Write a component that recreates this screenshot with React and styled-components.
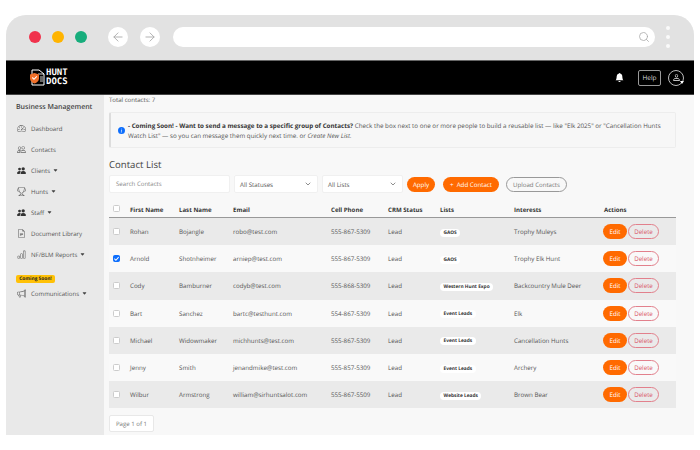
import React from 'react';
import styled, { createGlobalStyle } from 'styled-components';
import { ArrowLeft, ArrowRight, Search, ChevronDown } from 'lucide-react';
import {
  BsSpeedometer2, BsPeople, BsPeopleFill, BsTrophy, BsFileEarmarkText, BsBarChart,
  BsMegaphone, BsBellFill, BsPerson, BsInfoCircleFill, BsCaretDownFill,
} from 'react-icons/bs';

const contacts = [
  ['Rohan', 'Bojangle', 'robo@test.com', '555-867-5309', 'GAOS', 'Trophy Muleys'],
  ['Arnold', 'Shotnheimer', 'arniep@test.com', '555-867-5309', 'GAOS', 'Trophy Elk Hunt', true],
  ['Cody', 'Bamburner', 'codyb@test.com', '555-868-5309', 'Western Hunt Expo', 'Backcountry Mule Deer'],
  ['Bart', 'Sanchez', 'bartc@testhunt.com', '554-867-5309', 'Event Leads', 'Elk'],
  ['Michael', 'Widowmaker', 'michhunts@test.com', '555-867-5309', 'Event Leads', 'Cancellation Hunts'],
  ['Jenny', 'Smith', 'jenandmike@test.com', '555-857-5309', 'Event Leads', 'Archery'],
  ['Wilbur', 'Armstrong', 'william@sirhuntsalot.com', '555-867-5509', 'Website Leads', 'Brown Bear'],
];

const menu = [
  { label: 'Dashboard', icon: <BsSpeedometer2 size={9} /> },
  { label: 'Contacts', icon: <BsPeople size={9} /> },
  { label: 'Clients', icon: <BsPeopleFill size={9} color="#333" />, caret: true },
  { label: 'Hunts', icon: <BsTrophy size={9} />, caret: true },
  { label: 'Staff', icon: <BsPeopleFill size={9} color="#333" />, caret: true },
  { label: 'Document Library', icon: <BsFileEarmarkText size={9} /> },
  { label: 'NF/BLM Reports', icon: <BsBarChart size={9} />, caret: true },
];

export default function App() {
  return (
    <>
      <GlobalStyle />
      <Frame>
        <Chrome>
          <Light $color="#f0324c" />
          <Light $color="#ffb400" />
          <Light $color="#17ad7c" />
          <NavButtons>
            <RoundButton><ArrowLeft size={14} strokeWidth={1.5} /></RoundButton>
            <RoundButton><ArrowRight size={14} strokeWidth={1.5} /></RoundButton>
          </NavButtons>
          <UrlBar><Search size={12} strokeWidth={1.6} /></UrlBar>
          <Kebab><i /><i /><i /></Kebab>
        </Chrome>

        <TopBar>
          <Logo>
            <svg width="15" height="17" viewBox="0 0 15 17">
              <path d="M2 1h7l5 4v11H2z" fill="none" stroke="#fff" strokeWidth="1" />
              <path d="M8 5h6M10 8h3M10 10h3M10 12h3" stroke="#fff" strokeWidth="0.8" />
              <path d="M0 5.500l4.500-1.500 4.500 1.500v4c0 2.500-2 4-4.500 5C2 13.500 0 12 0 9.500z" fill="#f0702a" />
              <path d="M2.300 8.500l1.700 1.800 2.800-3" fill="none" stroke="#fff" strokeWidth="1.100" />
            </svg>
            <LogoText>HUNT<br />DOCS</LogoText>
          </Logo>
          <TopActions>
            <BsBellFill size={9} color="#fff" />
            <HelpButton>Help</HelpButton>
            <Avatar>
              <BsPerson size={9} color="#fff" />
              <AvatarCaret />
            </Avatar>
          </TopActions>
        </TopBar>

        <Body>
          <Sidebar>
            <SideTitle>Business Management</SideTitle>
            {menu.map(item => (
              <MenuItem key={item.label}>
                <MenuIcon>{item.icon}</MenuIcon>
                {item.label}
                {item.caret && <BsCaretDownFill size={5} color="#444" />}
              </MenuItem>
            ))}
            <Soon>Coming Soon!</Soon>
            <MenuItem>
              <MenuIcon><BsMegaphone size={9} /></MenuIcon>
              Communications
              <BsCaretDownFill size={5} color="#444" />
            </MenuItem>
          </Sidebar>

          <Main>
            <Total>Total contacts: 7</Total>
            <Notice>
              <NoticeIcon><BsInfoCircleFill size={7} color="#0d6efd" /></NoticeIcon>
              <div>
                <NoticeLine>
                  <b>- Coming Soon! - Want to send a message to a specific group of Contacts?</b> Check the box next to one or more people to build a reusable list — like "Elk 2025" or "Cancellation Hunts
                </NoticeLine>
                <NoticeLine>
                  Watch List" — so you can message them quickly next time. or <em>Create New List.</em>
                </NoticeLine>
              </div>
            </Notice>
            <Heading>Contact List</Heading>
            <Filters>
              <SearchBox>Search Contacts</SearchBox>
              <SelectBox $width="84px">All Statuses<ChevronDown size={8} /></SelectBox>
              <SelectBox $width="81px">All Lists<ChevronDown size={8} /></SelectBox>
              <OrangeButton $width="28px">Apply</OrangeButton>
              <OrangeButton $width="56px" $left="8px">+ &nbsp;Add Contact</OrangeButton>
              <UploadButton>Upload Contacts</UploadButton>
            </Filters>

            <HeadRow>
              <span><CheckBox /></span>
              <span>First Name</span>
              <span>Last Name</span>
              <span>Email</span>
              <span>Cell Phone</span>
              <span>CRM Status</span>
              <span>Lists</span>
              <span>Interests</span>
              <span>Actions</span>
            </HeadRow>
            {contacts.map((c, i) => (
              <Row key={c[2]} $odd={i % 2 === 0}>
                <span>
                  <CheckBox $checked={c[6]}>
                    {c[6] && (
                      <svg width="7" height="7" viewBox="0 0 8 8">
                        <path d="M1.500 4.200l1.800 1.800 3.200-3.600" fill="none" stroke="#fff" strokeWidth="1.200" />
                      </svg>
                    )}
                  </CheckBox>
                </span>
                <span>{c[0]}</span>
                <span>{c[1]}</span>
                <span>{c[2]}</span>
                <span>{c[3]}</span>
                <span>Lead</span>
                <span><Tag>{c[4]}</Tag></span>
                <span>{c[5]}</span>
                <Actions>
                  <EditButton>Edit</EditButton>
                  <DeleteButton>Delete</DeleteButton>
                </Actions>
              </Row>
            ))}
            <Pager>Page 1 of 1</Pager>
          </Main>
        </Body>
      </Frame>
    </>
  );
}

const GlobalStyle = createGlobalStyle`
  *, *:before, *:after {
    box-sizing: border-box;
  }

  body {
    margin: 0;
    background: #fff;
    font-family: 'Open Sans', sans-serif;
    color: #555;
    text-rendering: geometricPrecision;
  }
`;

const Frame = styled.div`
  width: 688px;
  height: 420px;
  margin: 15px 6px;
  display: flex;
  flex-direction: column;
  overflow: hidden;
  border-radius: 20px 20px 0 0;
  background: #f8f8f8;
`;

const Chrome = styled.div`
  height: 45px;
  flex: none;
  display: flex;
  align-items: center;
  padding: 0 0 1px 23px;
  background: #e2e2e2;
`;

const Light = styled.span`
  width: 12px;
  height: 12px;
  margin-right: 11px;
  border-radius: 50%;
  background: ${props => props.$color};
`;

const NavButtons = styled.div`
  display: flex;
  gap: 12px;
  margin: 0 13px 0 10px;
`;

const RoundButton = styled.span`
  width: 20px;
  height: 20px;
  display: flex;
  align-items: center;
  justify-content: center;
  border-radius: 50%;
  background: #fff;
  color: #a8a8a8;
`;

const UrlBar = styled.div`
  width: 482px;
  height: 20px;
  display: flex;
  align-items: center;
  justify-content: flex-end;
  padding-right: 5px;
  border-radius: 10px;
  background: #fff;
  color: #aaa;
`;

const Kebab = styled.div`
  display: flex;
  flex-direction: column;
  gap: 5px;
  margin-left: 11px;

  i {
    width: 4px;
    height: 4px;
    border-radius: 50%;
    background: #fafafa;
  }
`;

const TopBar = styled.header`
  height: 35px;
  flex: none;
  display: flex;
  align-items: center;
  justify-content: space-between;
  padding: 0 10px 0 24px;
  background: #000;
  border-top: 1px solid #666;
  border-bottom: 1px solid #444;
`;

const Logo = styled.div`
  display: flex;
  align-items: center;
  gap: 1px;
`;

const LogoText = styled.div`
  font-family: 'DejaVu Sans Mono', monospace;
  font-size: 9px;
  font-weight: 700;
  line-height: 8.500px;
  color: #fff;
`;

const TopActions = styled.div`
  display: flex;
  align-items: center;
`;

const HelpButton = styled.span`
  width: 23px;
  height: 16px;
  display: flex;
  align-items: center;
  justify-content: center;
  margin: 0 7px 0 14px;
  border: 1px solid #999;
  border-radius: 2px;
  font-size: 6.500px;
  color: #ddd;
`;

const Avatar = styled.span`
  position: relative;
  width: 16px;
  height: 16px;
  display: flex;
  align-items: center;
  justify-content: center;
  border: 1px solid #bbb;
  border-radius: 50%;
`;

const AvatarCaret = styled.i`
  position: absolute;
  right: -1px;
  bottom: 1px;
  border: 2px solid transparent;
  border-top: 3px solid #fff;
  border-bottom: 0;
`;

const Body = styled.div`
  flex: 1;
  display: flex;
  min-height: 0;
`;

const Sidebar = styled.aside`
  width: 98px;
  flex: none;
  padding: 7px 0 0 10px;
  background: #e9e9e9;
`;

const SideTitle = styled.div`
  height: 12px;
  margin-bottom: 4px;
  font-size: 7px;
  font-weight: 600;
  line-height: 12px;
  color: #444;
  white-space: nowrap;
`;

const MenuItem = styled.div`
  height: 21px;
  display: flex;
  align-items: center;
  gap: 3px;
  font-size: 6.100px;
  color: #555;
  white-space: nowrap;
`;

const MenuIcon = styled.span`
  width: 11px;
  margin-right: 1px;
  display: flex;
  justify-content: center;
  color: #666;
`;

const Soon = styled.span`
  display: block;
  width: 39px;
  height: 8px;
  margin-top: 9.500px;
  border-radius: 2px;
  background: #ffc107;
  font-size: 4.800px;
  font-weight: 700;
  line-height: 8px;
  text-align: center;
  color: #222;
`;

const Main = styled.main`
  flex: 1;
  min-width: 0;
  padding: 0 18px 0 5px;
`;

const Total = styled.div`
  height: 10px;
  font-size: 6.100px;
  line-height: 10px;
`;

const Notice = styled.div`
  height: 36px;
  margin-top: 7px;
  display: flex;
  align-items: center;
  padding: 1px 0 0 7px;
  background: #f7f7f7;
  border: 1px solid #ededed;
  border-left: 2px solid #ddd;
  border-radius: 2px;
`;

const NoticeIcon = styled.span`
  display: flex;
  margin-right: 3px;
`;

const NoticeLine = styled.div`
  height: 10px;
  font-size: 6.250px;
  line-height: 10px;
  color: #555;
  white-space: nowrap;

  b {
    font-weight: 700;
    color: #333;
  }
`;

const Heading = styled.h2`
  margin: 10px 0 3px;
  height: 14px;
  font-size: 9.600px;
  font-weight: 500;
  line-height: 14px;
  color: #444;
`;

const Filters = styled.div`
  display: flex;
  align-items: center;
  height: 18px;
  margin-bottom: 9px;
`;

const SearchBox = styled.div`
  width: 121px;
  height: 18px;
  margin-right: 4px;
  padding-left: 6px;
  background: #fff;
  border: 1px solid #f0f0f0;
  border-radius: 2px;
  font-size: 6.100px;
  line-height: 16px;
  color: #888;
`;

const SelectBox = styled.div`
  width: ${props => props.$width};
  height: 18px;
  margin-right: 4px;
  display: flex;
  align-items: center;
  justify-content: space-between;
  padding: 0 5px 0 5px;
  background: #fff;
  border: 1px solid #f0f0f0;
  border-radius: 2px;
  font-size: 6.200px;
  color: #555;
`;

const OrangeButton = styled.span`
  width: ${props => props.$width};
  height: 15px;
  margin-left: ${props => props.$left || 0};
  display: flex;
  align-items: center;
  justify-content: center;
  border-radius: 8px;
  background: #ff6a00;
  font-size: 6.200px;
  color: #fff;
  white-space: nowrap;
`;

const UploadButton = styled.span`
  width: 61px;
  height: 15px;
  margin-left: 7px;
  display: flex;
  align-items: center;
  justify-content: center;
  border: 1px solid #999;
  border-radius: 8px;
  font-size: 6.100px;
  color: #777;
`;

const columns = '21px 49px 54px 98px 57px 52px 74px 90px 1fr';

const HeadRow = styled.div`
  height: 16px;
  display: grid;
  grid-template-columns: ${columns};
  align-items: center;
  padding-bottom: 1px;
  border-bottom: 1px solid #999;
  font-size: 6.100px;
  font-weight: 700;
  color: #333;
  white-space: nowrap;

  span:first-child {
    padding-left: 4px;
  }
`;

const Row = styled.div`
  height: 27.200px;
  display: grid;
  grid-template-columns: ${columns};
  align-items: center;
  background: ${props => (props.$odd ? '#eaeaea' : '#f9f9f9')};
  font-size: 6.200px;
  color: #555;
  white-space: nowrap;

  > span:first-child {
    padding-left: 4px;
    display: flex;
  }
`;

const CheckBox = styled.i`
  width: 7px;
  height: 7px;
  display: inline-flex;
  align-items: center;
  justify-content: center;
  background: ${props => (props.$checked ? '#0d6efd' : '#fff')};
  border: 1px solid ${props => (props.$checked ? '#0d6efd' : '#ccc')};
  border-radius: 1.500px;
  overflow: hidden;

  svg {
    flex: none;
  }
`;

const Tag = styled.span`
  display: inline-block;
  height: 8px;
  padding: 0 3.500px;
  background: #fff;
  border-radius: 4px;
  font-size: 4.800px;
  font-weight: 700;
  line-height: 8px;
  color: #333;
`;

const Actions = styled.span`
  display: flex;
  gap: 1px;
  margin-left: -1px;
`;

const EditButton = styled.span`
  width: 24px;
  height: 15px;
  display: flex;
  align-items: center;
  justify-content: center;
  border-radius: 8px;
  background: #ff6a00;
  color: #fff;
`;

const DeleteButton = styled.span`
  width: 31px;
  height: 15px;
  display: flex;
  align-items: center;
  justify-content: center;
  border: 1px solid #e2808c;
  border-radius: 8px;
  color: #d9596a;
`;

const Pager = styled.div`
  width: 45px;
  height: 17px;
  margin-top: 7px;
  background: #fff;
  border: 1px solid #e8e8e8;
  border-radius: 2px;
  font-size: 6.100px;
  line-height: 15px;
  text-align: center;
  color: #777;
`;
